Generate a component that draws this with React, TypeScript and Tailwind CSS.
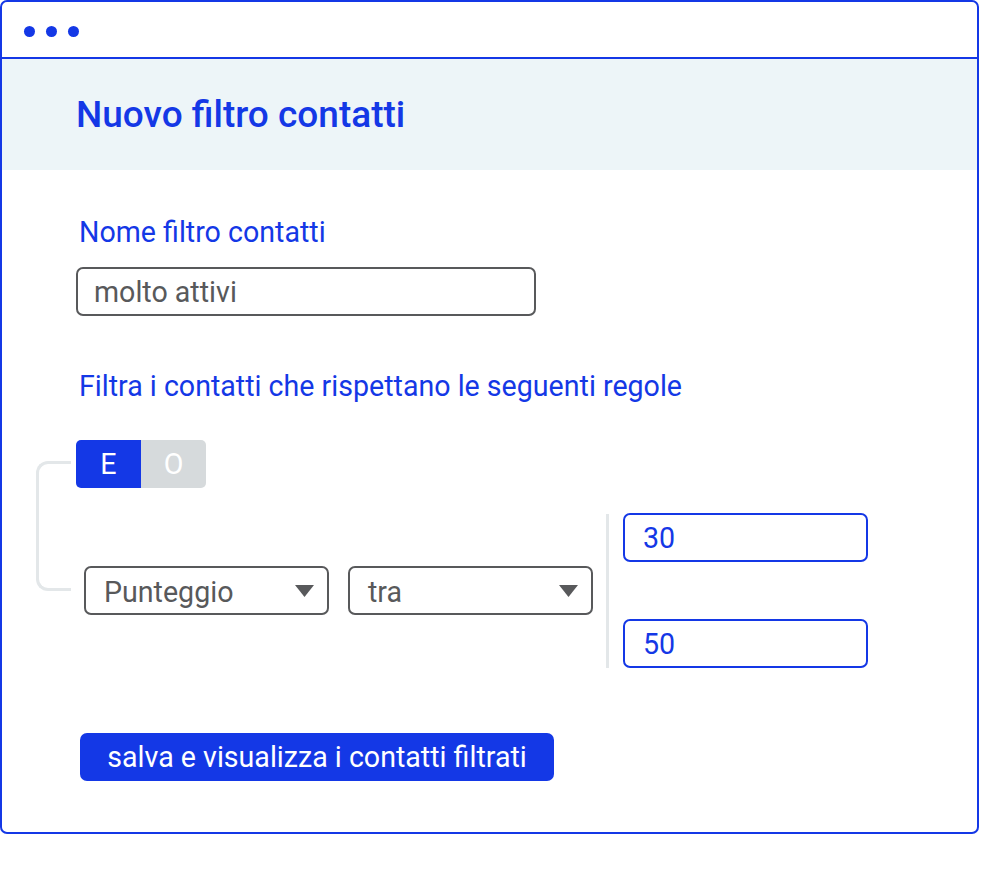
export default function App() {
  return (
    <div className="bg-white w-[981px] h-[880px]" style={{ fontFamily: 'Roboto, "Liberation Sans", sans-serif' }}>
      <div className="w-[979px] h-[834px] border-2 border-[#1438e6] rounded-[7px] overflow-hidden flex flex-col">
        {/* Window bar */}
        <div className="h-[57px] border-b-2 border-[#1438e6] flex items-start pt-[24px] gap-[11px] pl-[22px] shrink-0">
          <span className="w-[11px] h-[11px] rounded-full bg-[#1438e6]" />
          <span className="w-[11px] h-[11px] rounded-full bg-[#1438e6]" />
          <span className="w-[11px] h-[11px] rounded-full bg-[#1438e6]" />
        </div>

        {/* Header */}
        <div className="h-[111px] bg-[#edf5f8] flex items-center pl-[74px] shrink-0">
          <h1 className="text-[37px] font-medium text-[#1438e6] leading-none">Nuovo filtro contatti</h1>
        </div>

        {/* Body */}
        <div className="flex flex-col">
          <label className="ml-[77px] mt-[46px] text-[28.6px] leading-[32px] text-[#1438e6]">Nome filtro contatti</label>
          <div className="ml-[74px] mt-[19px] w-[460px] h-[49px] border-2 border-[#58595b] rounded-[7px] flex items-center pl-[16px] pt-[1px] text-[28.6px] text-[#58595b]">
            molto attivi
          </div>

          <p className="ml-[77px] mt-[54px] text-[28.6px] leading-[32px] text-[#1438e6]">
            Filtra i contatti che rispettano le seguenti regole
          </p>

          {/* Rule group */}
          <div className="flex mt-[38px] ml-[34px]">
            <div className="w-[35px] h-[130px] mt-[21px] border-l-[3px] border-y-[3px] border-[#e3e7e9] rounded-l-[12px] shrink-0" />
            <div className="flex flex-col ml-[5px]">
              <div className="flex w-[130px] h-[48px] rounded-[5px] overflow-hidden text-[28.6px] text-white">
                <div className="w-[65px] bg-[#1438e6] flex items-center justify-center">E</div>
                <div className="w-[65px] bg-[#d6dadc] flex items-center justify-center">O</div>
              </div>

              <div className="flex items-center mt-[25px] ml-[8px]">
                <div className="w-[245px] h-[49px] border-2 border-[#58595b] rounded-[7px] flex items-center justify-between pl-[18px] pr-[13px] text-[28.6px] text-[#58595b]">
                  <span className="pt-[4px]">Punteggio</span>
                  <svg width="19" height="12" viewBox="0 0 19 12">
                    <path d="M0 0h19L9.5 12z" fill="#58595b" />
                  </svg>
                </div>
                <div className="w-[245px] h-[49px] ml-[19px] border-2 border-[#58595b] rounded-[7px] flex items-center justify-between pl-[18px] pr-[13px] text-[28.6px] text-[#58595b]">
                  <span className="pt-[4px]">tra</span>
                  <svg width="19" height="12" viewBox="0 0 19 12">
                    <path d="M0 0h19L9.5 12z" fill="#58595b" />
                  </svg>
                </div>
                <div className="w-[3px] h-[154px] bg-[#e3e7e9] ml-[13px]" />
                <div className="flex flex-col gap-[57px] ml-[14px]">
                  <div className="w-[245px] h-[49px] border-2 border-[#1438e6] rounded-[7px] flex items-center pl-[18px] pt-[1px] text-[28.6px] text-[#1438e6]">
                    30
                  </div>
                  <div className="w-[245px] h-[49px] border-2 border-[#1438e6] rounded-[7px] flex items-center pl-[18px] pt-[1px] text-[28.6px] text-[#1438e6]">
                    50
                  </div>
                </div>
              </div>
            </div>
          </div>

          <button className="ml-[78px] mt-[65px] w-[474px] h-[48px] bg-[#1438e6] rounded-[7px] text-white text-[28.6px] flex items-center justify-center pt-[1px]">
            salva e visualizza i contatti filtrati
          </button>
        </div>
      </div>
    </div>
  )
}
